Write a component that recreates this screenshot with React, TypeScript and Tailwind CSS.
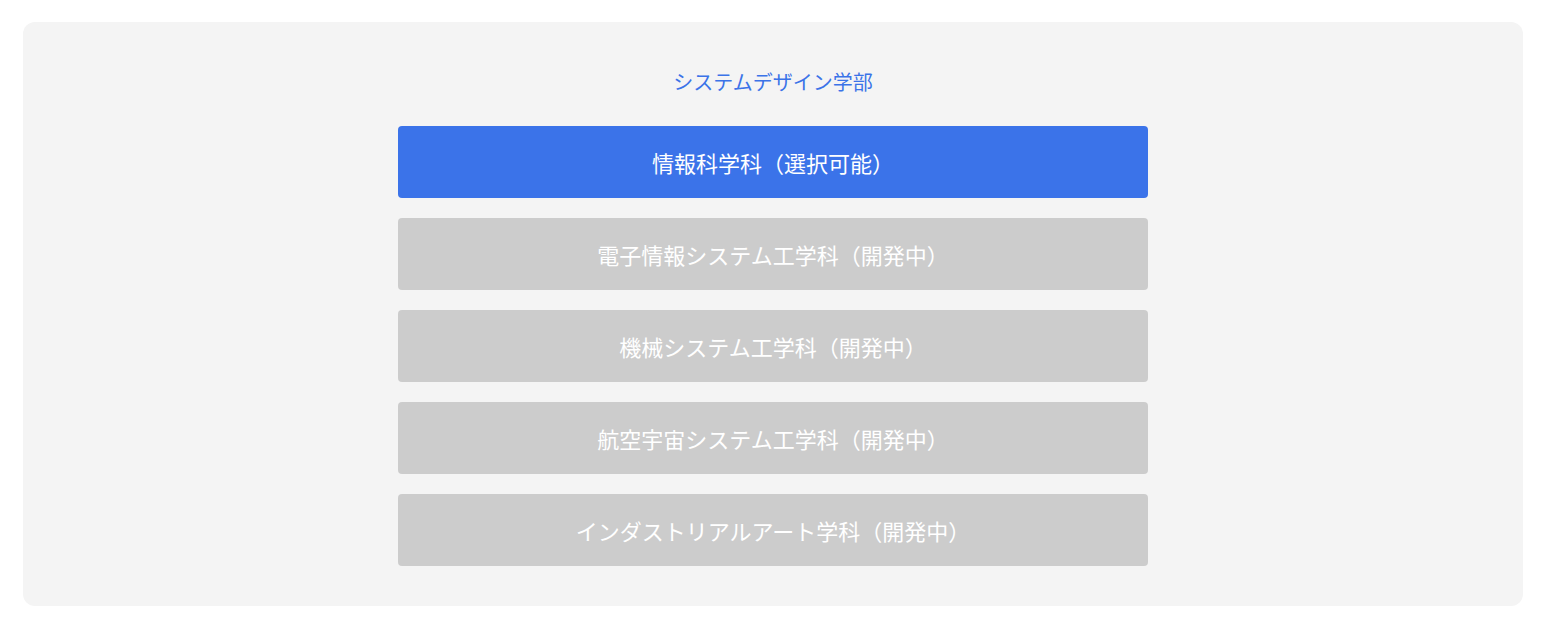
import React from "react";

const items = [
  { label: "情報科学科（選択可能）", active: true },
  { label: "電子情報システム工学科（開発中）", active: false },
  { label: "機械システム工学科（開発中）", active: false },
  { label: "航空宇宙システム工学科（開発中）", active: false },
  { label: "インダストリアルアート学科（開発中）", active: false },
];

export default function App() {
  return (
    <div
      className="min-h-screen bg-white pt-[22px] pl-[23px]"
      style={{ fontFamily: '"Noto Sans CJK JP", "Noto Sans", sans-serif' }}
    >
      <div className="w-[1500px] rounded-xl bg-[#f4f4f4] pt-[46px] pb-10">
        <h2 className="text-center text-[20px] leading-[28px] font-normal text-[#3b73e8]">
          システムデザイン学部
        </h2>
        <div className="mx-auto mt-[30px] flex w-[750px] flex-col gap-5">
          {items.map((it) => (
            <button
              key={it.label}
              className={
                it.active
                  ? "flex h-[72px] w-full items-center justify-center rounded bg-[#3b73e9] text-[22px] text-white"
                  : "flex h-[72px] w-full items-center justify-center rounded bg-[#cccccc] text-[22px] text-white"
              }
            >
              {it.label}
            </button>
          ))}
        </div>
      </div>
    </div>
  );
}
